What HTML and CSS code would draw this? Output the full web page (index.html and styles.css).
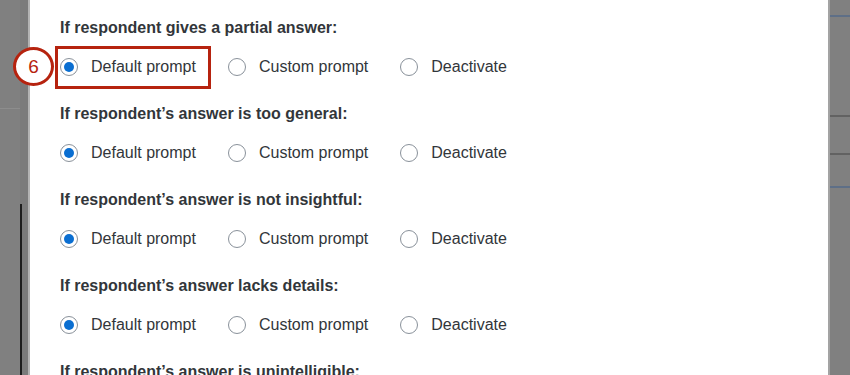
FILE: index.html
```html
<!DOCTYPE html>
<html>
<head>
<meta charset="utf-8">
<link rel="stylesheet" href="styles.css">
</head>
<body>
<div class="screen">
  <div class="side-left">
    <div class="sl-main"><div class="sl-top"></div></div>
    <div class="sl-band"><div class="sl-rule"></div></div>
    <div class="sl-edge"></div>
  </div>
  <div class="modal">
    <div class="section">
      <div class="heading">If respondent gives a partial answer:</div>
      <div class="options">
        <div class="option checked highlighted">
          <span class="radio"></span><span class="label">Default prompt</span>
          <span class="callout-box"></span>
          <span class="step">6</span>
        </div>
        <div class="option"><span class="radio"></span><span class="label">Custom prompt</span></div>
        <div class="option"><span class="radio"></span><span class="label">Deactivate</span></div>
      </div>
    </div>
    <div class="section">
      <div class="heading">If respondent’s answer is too general:</div>
      <div class="options">
        <div class="option checked"><span class="radio"></span><span class="label">Default prompt</span></div>
        <div class="option"><span class="radio"></span><span class="label">Custom prompt</span></div>
        <div class="option"><span class="radio"></span><span class="label">Deactivate</span></div>
      </div>
    </div>
    <div class="section">
      <div class="heading">If respondent’s answer is not insightful:</div>
      <div class="options">
        <div class="option checked"><span class="radio"></span><span class="label">Default prompt</span></div>
        <div class="option"><span class="radio"></span><span class="label">Custom prompt</span></div>
        <div class="option"><span class="radio"></span><span class="label">Deactivate</span></div>
      </div>
    </div>
    <div class="section">
      <div class="heading">If respondent’s answer lacks details:</div>
      <div class="options">
        <div class="option checked"><span class="radio"></span><span class="label">Default prompt</span></div>
        <div class="option"><span class="radio"></span><span class="label">Custom prompt</span></div>
        <div class="option"><span class="radio"></span><span class="label">Deactivate</span></div>
      </div>
    </div>
    <div class="section">
      <div class="heading">If respondent’s answer is unintelligible:</div>
    </div>
  </div>
  <div class="side-right">
    <div class="sr-row sr-a"></div>
    <div class="sr-row sr-b"></div>
    <div class="sr-row sr-c"></div>
    <div class="sr-row sr-d"></div>
    <div class="sr-rest"></div>
  </div>
</div>
</body>
</html>
```

FILE: styles.css
```css
html, body {
  margin: 0;
  padding: 0;
  width: 850px;
  height: 375px;
  overflow: hidden;
  background: #808080;
}
.screen {
  display: flex;
  width: 850px;
  height: 375px;
  overflow: hidden;
}
.side-left {
  width: 30px;
  display: flex;
  flex-shrink: 0;
}
.sl-main {
  width: 20px;
  background: #808080;
}
.sl-top {
  height: 108px;
  border-bottom: 1px solid #8d8d8d;
}
.sl-band {
  width: 8px;
  background: #7b7b7b;
  padding-top: 204px;
  box-sizing: border-box;
}
.sl-rule {
  height: 100%;
  width: 2px;
  background: #1e1e1e;
}
.sl-edge {
  width: 2px;
  background: #b3b3b3;
}
.modal {
  flex: 1;
  background: #ffffff;
  padding: 18px 0 0 30px;
  box-sizing: border-box;
  font-family: "Liberation Sans", Arial, sans-serif;
  color: #32363a;
  position: relative;
}
.section {
  margin-bottom: 17px;
}
.heading {
  font-size: 16px;
  font-weight: bold;
  line-height: 20px;
  height: 20px;
  white-space: nowrap;
}
.options {
  display: flex;
  align-items: center;
  gap: 32px;
  height: 40px;
  margin-top: 9px;
}
.option {
  display: flex;
  align-items: center;
  position: relative;
  font-size: 16px;
  line-height: 20px;
}
.radio {
  width: 18px;
  height: 18px;
  box-sizing: border-box;
  border: 1px solid #89919a;
  border-radius: 50%;
  margin-right: 13px;
  display: flex;
  align-items: center;
  justify-content: center;
  background: #fff;
}
.option.checked .radio::after {
  content: "";
  width: 10px;
  height: 10px;
  border-radius: 50%;
  background: #0a6ed1;
}
.callout-box {
  position: absolute;
  left: -5px;
  top: -11px;
  width: 156px;
  height: 43px;
  border: 3px solid #b6230f;
  box-sizing: border-box;
}
.step {
  position: absolute;
  left: -47px;
  top: -10px;
  width: 41px;
  height: 39px;
  box-sizing: border-box;
  border: 3px solid #b6230f;
  border-radius: 50%;
  background: #fff;
  color: #b6230f;
  font-size: 19px;
  display: flex;
  align-items: center;
  justify-content: center;
}
.side-right {
  width: 22px;
  flex-shrink: 0;
  background: #808080;
  border-left: 2px solid #a3a3a3;
  box-sizing: border-box;
  position: relative;
  z-index: 1;
}
.sr-a {
  height: 15px;
  border-bottom: 2px solid #5e6f87;
}
.sr-b {
  height: 98px;
  border-bottom: 2px solid #626262;
}
.sr-c {
  height: 36px;
  border-bottom: 2px solid #626262;
}
.sr-d {
  height: 31px;
  border-bottom: 2px solid #5e6f87;
}
```
